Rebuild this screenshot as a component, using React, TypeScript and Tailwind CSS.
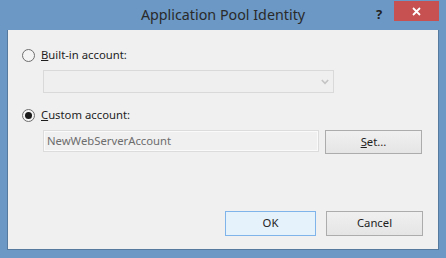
import React from 'react';

const font = { fontFamily: '"Segoe UI", "Noto Sans", "Open Sans", sans-serif' };

function Radio({ checked }: { checked?: boolean }) {
  return (
    <span className="flex h-[13px] w-[13px] items-center justify-center rounded-full border border-[#6e6e6e] bg-[#f4f4f4]">
      {checked && <span className="h-[7px] w-[7px] rounded-full bg-[#1a1a1a]" />}
    </span>
  );
}

export default function App() {
  return (
    <div className="h-[258px] w-[446px] bg-[#6b98c4] text-[11.3px] text-[#1e1e1e]" style={font}>
      <div className="relative flex h-[30px] items-center justify-center">
        <span className="text-[14.3px] text-[#2a2a2a] pb-[1px]">Application Pool Identity</span>
        <span className="absolute left-[376px] top-[5px] text-[13px] font-bold text-[#222]">?</span>
        <div className="absolute left-[394px] top-[1px] flex h-[20px] w-[45px] items-center justify-center bg-[#c75050]">
          <svg width="9" height="9" viewBox="0 0 9 9" stroke="#fff" strokeWidth="1.8">
            <path d="M1 1L8 8M8 1L1 8" />
          </svg>
        </div>
      </div>
      <div className="ml-[7px] h-[220px] w-[432px] border-x border-b border-[#56799e] bg-[#f0f0f0]">
        <div className="pl-[14px] pt-[19px]">
          <div className="flex h-[13px] items-center gap-[6px]">
            <Radio />
            <span><span className="underline">B</span>uilt-in account:</span>
          </div>
          <div className="ml-[21px] mt-[8px] flex h-[23px] w-[291px] items-center justify-end border border-[#d9d9d9] bg-[#efefef] pr-[4px]">
            <svg width="8" height="6" viewBox="0 0 8 6" fill="none" stroke="#c4c4c4" strokeWidth="1.6">
              <path d="M0.8 1L4 4.4L7.2 1" />
            </svg>
          </div>
          <div className="mt-[16px] flex h-[13px] items-center gap-[6px]">
            <Radio checked />
            <span><span className="underline">C</span>ustom account:</span>
          </div>
          <div className="ml-[21px] mt-[8px] flex items-start gap-[6px]">
            <div className="flex h-[22px] w-[276px] items-center border border-[#dcdcdc] bg-[#f0f0f0] pl-[3px] text-[#6d6d6d] shadow-[inset_0_0_0_1px_#fafafa]">
              NewWebServerAccount
            </div>
            <div className="flex h-[24px] w-[97px] items-center justify-center border border-[#acacac] bg-gradient-to-b from-[#f0f0f0] to-[#e5e5e5]">
              <span><span className="underline">S</span>et...</span>
            </div>
          </div>
          <div className="mt-[57px] flex gap-[10px] pl-[203px]">
            <div className="flex h-[25px] w-[91px] items-center justify-center border border-[#7eb4ea] bg-[#e5f1fb]">OK</div>
            <div className="flex h-[25px] w-[97px] items-center justify-center border border-[#acacac] bg-gradient-to-b from-[#f0f0f0] to-[#e5e5e5]">Cancel</div>
          </div>
        </div>
      </div>
    </div>
  );
}
